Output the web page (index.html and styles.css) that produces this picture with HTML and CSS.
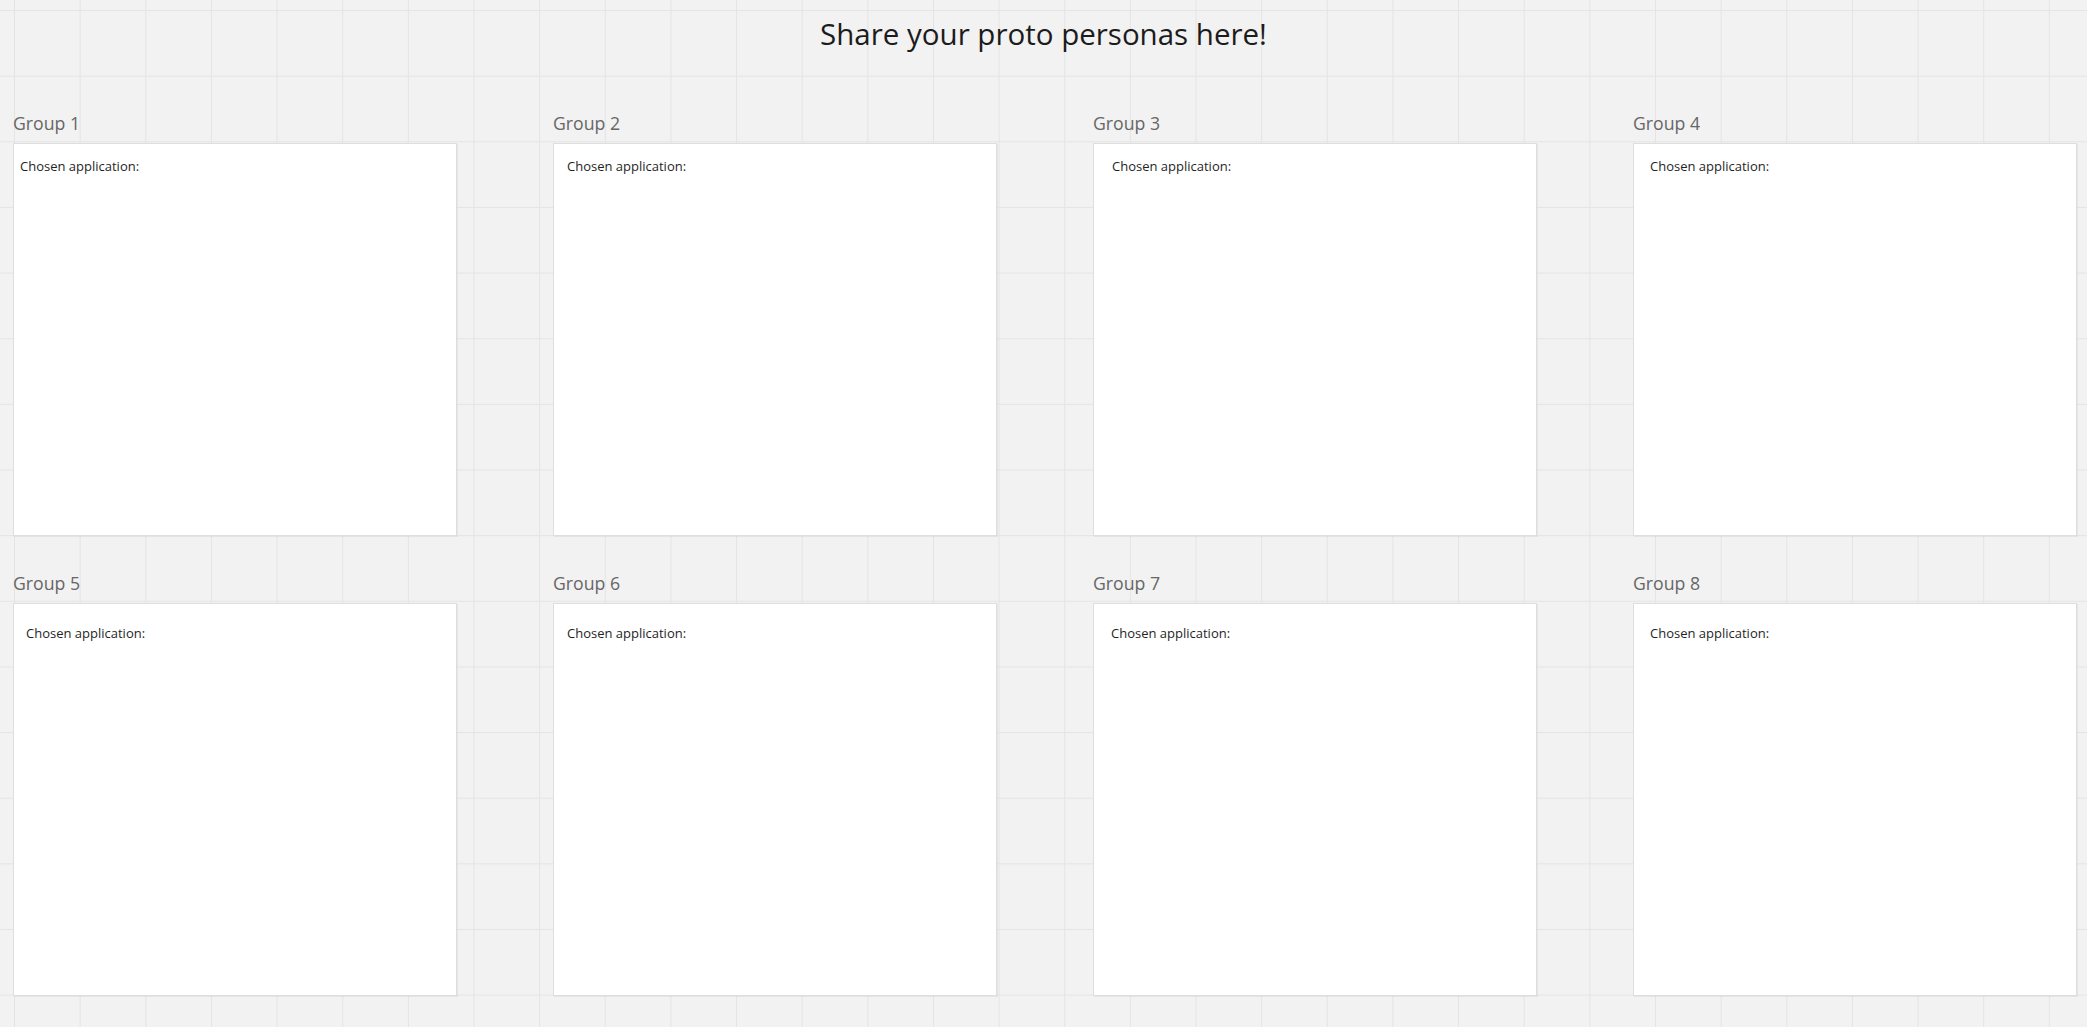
FILE: index.html
```html
<!DOCTYPE html>
<html lang="en">
<head>
<meta charset="utf-8">
<title>Share your proto personas here!</title>
<link rel="stylesheet" href="styles.css">
</head>
<body>
<div class="canvas">
  <h1 class="title">Share your proto personas here!</h1>
  <div class="board">
    <section class="group row1">
      <div class="label">Group 1</div>
      <div class="card in-7"><p class="note">Chosen application:</p></div>
    </section>
    <section class="group row1">
      <div class="label">Group 2</div>
      <div class="card in-14"><p class="note">Chosen application:</p></div>
    </section>
    <section class="group row1">
      <div class="label">Group 3</div>
      <div class="card in-19"><p class="note">Chosen application:</p></div>
    </section>
    <section class="group row1">
      <div class="label">Group 4</div>
      <div class="card in-17"><p class="note">Chosen application:</p></div>
    </section>
    <section class="group row2">
      <div class="label">Group 5</div>
      <div class="card in-13"><p class="note">Chosen application:</p></div>
    </section>
    <section class="group row2">
      <div class="label">Group 6</div>
      <div class="card in-14"><p class="note">Chosen application:</p></div>
    </section>
    <section class="group row2">
      <div class="label">Group 7</div>
      <div class="card in-18"><p class="note">Chosen application:</p></div>
    </section>
    <section class="group row2">
      <div class="label">Group 8</div>
      <div class="card in-17"><p class="note">Chosen application:</p></div>
    </section>
  </div>
</div>
</body>
</html>
```

FILE: styles.css
```css
html, body {
  margin: 0;
  padding: 0;
}

body {
  width: 2087px;
  height: 1027px;
  overflow: hidden;
  font-family: "Open Sans", "Noto Sans", "Liberation Sans", sans-serif;
  background-color: #f2f2f2;
  background-image:
    linear-gradient(to right, #e4e4e4 1px, transparent 1px),
    linear-gradient(to bottom, #e4e4e4 1px, transparent 1px);
  background-size: 65.65px 65.65px;
  background-position: 14px 10px;
}

.canvas {
  display: flex;
  flex-direction: column;
}

.title {
  margin: 0;
  padding-top: 14px;
  font-size: 29.5px;
  line-height: 40px;
  font-weight: 400;
  color: #1c1c1c;
  text-align: center;
}

.board {
  display: grid;
  grid-template-columns: repeat(4, 444px);
  column-gap: 96px;
  row-gap: 35px;
  padding: 57px 0 0 13px;
}

.group {
  display: flex;
  flex-direction: column;
}

.label {
  font-size: 17.7px;
  line-height: 24px;
  height: 24px;
  color: #666666;
  margin-bottom: 8px;
  white-space: nowrap;
}

.card {
  box-sizing: border-box;
  height: 393px;
  background: #ffffff;
  border: 1px solid #dedede;
  box-shadow: 1px 1px 0 rgba(0, 0, 0, 0.05);
}

.note {
  margin: 0;
  font-size: 13px;
  line-height: 18px;
  color: #1f1f1f;
  white-space: nowrap;
}

.row1 .note { padding-top: 13px; }
.row2 .note { padding-top: 20px; }

.in-7 .note { padding-left: 6px; }
.in-13 .note { padding-left: 12px; }
.in-14 .note { padding-left: 13px; }
.in-17 .note { padding-left: 16px; }
.in-18 .note { padding-left: 17px; }
.in-19 .note { padding-left: 18px; }
```
